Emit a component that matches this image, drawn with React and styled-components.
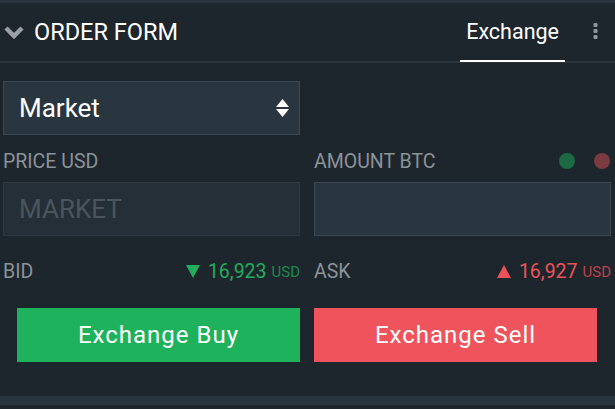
import styled, { createGlobalStyle } from 'styled-components'

const GlobalStyle = createGlobalStyle`
  html, body {
    margin: 0;
    padding: 0;
    background: #1e262d;
    font-family: Roboto, "Liberation Sans", sans-serif;
  }
  * { box-sizing: border-box; }
`;

const Panel = styled.div`
  width: 615px;
  height: 409px;
  border-top: 3px solid #27333d;
  background: #1e262d;
  display: flex;
  flex-direction: column;
  overflow: hidden;
`;

const Header = styled.div`
  height: 60px;
  border-bottom: 2px solid #2b343b;
  display: flex;
  align-items: stretch;
  padding-left: 4px;
`;

const Title = styled.div`
  display: flex;
  align-items: center;
  gap: 10px;
  color: #fff;
  font-size: 23.5px;
  font-weight: 400;
  flex: 1;
`;

const Tab = styled.div`
  display: flex;
  align-items: center;
  padding: 0 6px;
  color: #fff;
  font-size: 21.5px;
  border-bottom: 2px solid ${p => (p.$active ? '#fff' : 'transparent')};
  margin-bottom: -1px;
`;

const Kebab = styled.div`
  width: 50px;
  display: flex;
  align-items: center;
  justify-content: center;
  padding-left: 10px;
  padding-bottom: 2px;
`;

const Body = styled.div`
  padding: 18px 4px 0 3px;
  flex: 1;
  display: flex;
  flex-direction: column;
`;

const Select = styled.div`
  width: 297px;
  height: 54px;
  background: #293640;
  border: 1px solid #3b4852;
  display: flex;
  align-items: center;
  justify-content: space-between;
  padding: 0 10px 0 15px;
  color: #fff;
  font-size: 26px;
`;

const Columns = styled.div`
  display: grid;
  grid-template-columns: 297px 297px;
  column-gap: 14px;
`;

const Column = styled.div`
  display: flex;
  flex-direction: column;
`;

const LabelRow = styled.div`
  height: 24px;
  margin-top: 14px;
  margin-bottom: 9px;
  display: flex;
  align-items: center;
  justify-content: space-between;
  color: #8b9298;
  font-size: 19.5px;
`;

const Dots = styled.div`
  display: flex;
  gap: 19px;
  padding-right: 1px;
`;

const Dot = styled.span`
  width: 16px;
  height: 16px;
  border-radius: 50%;
  background: ${p => p.$color};
`;

const Input = styled.div`
  height: 54px;
  background: ${p => (p.$disabled ? '#242f37' : '#293640')};
  border: 1px solid ${p => (p.$disabled ? '#2d3841' : '#3b4852')};
  display: flex;
  align-items: center;
  padding-left: 15px;
  color: #4b555d;
  font-size: 26px;
`;

const QuoteRow = styled.div`
  height: 24px;
  margin-top: 23px;
  display: flex;
  align-items: center;
  justify-content: space-between;
  color: #8b9298;
  font-size: 19.5px;
`;

const Quote = styled.div`
  display: flex;
  align-items: center;
  color: ${p => p.$color};
  svg { margin-right: 8px; }
`;

const Unit = styled.span`
  font-size: 15px;
  margin-left: 5px;
  margin-top: 2px;
  color: ${p => p.$color};
`;

const Button = styled.button`
  width: 283px;
  height: 54px;
  margin-top: 25px;
  align-self: ${p => (p.$side === 'right' ? 'flex-start' : 'flex-end')};
  border: none;
  background: ${p => p.$bg};
  color: #fff;
  font-family: Roboto, "Liberation Sans", sans-serif;
  font-size: 24px;
  letter-spacing: 1px;
  cursor: pointer;
`;

const Footer = styled.div`
  margin-top: 34px;
  height: 9px;
  background: #28343e;
  margin-left: -3px;
  margin-right: -4px;
`;

const Chevron = () => (
  <svg width="20" height="14" viewBox="0 0 20 14">
    <polyline points="2,3 10,11 18,3" fill="none" stroke="#9aa0a6" strokeWidth="4.5" />
  </svg>
);

const KebabIcon = () => (
  <svg width="5" height="16" viewBox="0 0 5 16">
    <rect x="0.5" y="0" width="4" height="4" rx="1" fill="#8f979d" />
    <rect x="0.5" y="6" width="4" height="4" rx="1" fill="#8f979d" />
    <rect x="0.5" y="12" width="4" height="4" rx="1" fill="#8f979d" />
  </svg>
);

const SortIcon = () => (
  <svg width="13" height="18" viewBox="0 0 13 18">
    <polygon points="6.5,0 13,8 0,8" fill="#fff" />
    <polygon points="0,10 13,10 6.5,18" fill="#fff" />
  </svg>
);

const Triangle = ({ dir, color }) => (
  <svg width="14" height="13" viewBox="0 0 14 13">
    {dir === 'down'
      ? <polygon points="0,0 14,0 7,13" fill={color} />
      : <polygon points="7,0 14,13 0,13" fill={color} />}
  </svg>
);

const App = () => {
  return (
    <>
      <GlobalStyle />
      <Panel>
        <Header>
          <Title>
            <Chevron />
            ORDER FORM
          </Title>
          <Tab $active>Exchange</Tab>
          <Kebab>
            <KebabIcon />
          </Kebab>
        </Header>
        <Body>
          <Select>
            Market
            <SortIcon />
          </Select>
          <Columns>
            <Column>
              <LabelRow>PRICE USD</LabelRow>
              <Input $disabled>MARKET</Input>
              <QuoteRow>
                BID
                <Quote $color="#20ad5c">
                  <Triangle dir="down" color="#20ad5c" />
                  16,923
                  <Unit $color="#1a8a4b">USD</Unit>
                </Quote>
              </QuoteRow>
              <Button $bg="#1fb25c">Exchange Buy</Button>
            </Column>
            <Column>
              <LabelRow>
                AMOUNT BTC
                <Dots>
                  <Dot $color="#1c6a43" />
                  <Dot $color="#7b3b40" />
                </Dots>
              </LabelRow>
              <Input />
              <QuoteRow>
                ASK
                <Quote $color="#ee5258">
                  <Triangle dir="up" color="#ee5258" />
                  16,927
                  <Unit $color="#b8444a">USD</Unit>
                </Quote>
              </QuoteRow>
              <Button $side="right" $bg="#ef535b">Exchange Sell</Button>
            </Column>
          </Columns>
          <Footer />
        </Body>
      </Panel>
    </>
  )
}

export default App
